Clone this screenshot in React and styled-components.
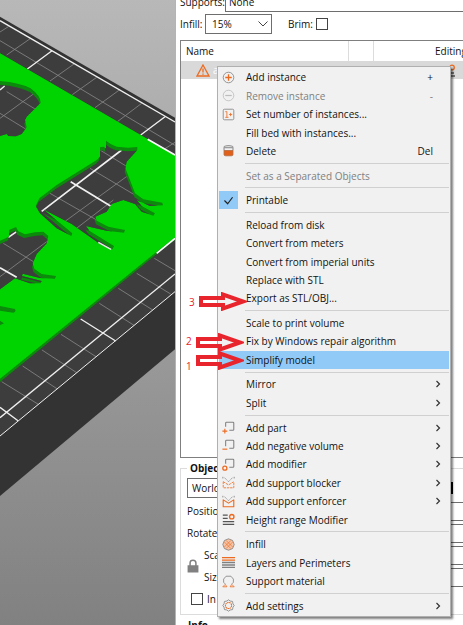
import React, { useState } from "react";
import styled, { createGlobalStyle, css } from "styled-components";

const BODY_HOLE =
  "M318,422 L332,432 L350,440 L385,443 L412,441 L412,450 L380,485 L376,505 L390,540 L405,580 L430,598 L487,608 L489,616 L450,618 L410,600 L425,618 L465,640 L460,647 L425,635 L405,612 L370,600 L335,612 L320,635 L286,650 L290,662 L325,680 L375,690 L372,698 L320,692 L258,678 L268,692 L342,738 L338,748 L300,732 L215,672 L130,628 L217,700 L214,708 L170,685 L120,640 L107,618 L118,595 L170,555 L290,480 L300,470 L300,442 L310,440 L318,445 Z";
const HEAD_HOLE =
  "M0,722 L27,710 L27,690 L48,681 L55,694 L75,703 L105,697 L130,695 L145,708 L140,730 L110,762 L98,790 L103,806 L125,822 L168,828 L165,836 L120,834 L68,821 L66,828 L125,843 L122,850 L90,850 L45,835 L0,868 Z";
const BACK_HOLE =
  "M0,243 Q60,248 92,265 Q122,288 122,308 L80,350 L75,360 L80,382 L65,402 L48,409 L25,408 L20,402 L0,408 Z";

const holes = [
  { id: "body", d: BODY_HOLE },
  { id: "head", d: HEAD_HOLE },
  { id: "back", d: BACK_HOLE },
];

const menuGroups = [
  [
    { label: "Add instance", icon: "plus", hint: "+" },
    { label: "Remove instance", icon: "minus", hint: "-", disabled: true },
    { label: "Set number of instances...", icon: "count" },
    { label: "Fill bed with instances..." },
    { label: "Delete", icon: "bin", hint: "Del" },
  ],
  [{ label: "Set as a Separated Objects", disabled: true }],
  [{ label: "Printable", checkable: true }],
  [
    { label: "Reload from disk" },
    { label: "Convert from meters" },
    { label: "Convert from imperial units" },
    { label: "Replace with STL" },
    { label: "Export as STL/OBJ..." },
  ],
  [
    { label: "Scale to print volume" },
    { label: "Fix by Windows repair algorithm" },
    { label: "Simplify model", active: true },
  ],
  [
    { label: "Mirror", sub: true },
    { label: "Split", sub: true },
  ],
  [
    { label: "Add part", icon: "part", sub: true },
    { label: "Add negative volume", icon: "negative", sub: true },
    { label: "Add modifier", icon: "modifier", sub: true },
    { label: "Add support blocker", icon: "blocker", sub: true },
    { label: "Add support enforcer", icon: "enforcer", sub: true },
    { label: "Height range Modifier", icon: "height" },
  ],
  [
    { label: "Infill", icon: "infill" },
    { label: "Layers and Perimeters", icon: "layers" },
    { label: "Support material", icon: "support" },
  ],
  [{ label: "Add settings", icon: "settings", sub: true }],
];

const steps = [
  { n: 3, top: 292, left: 189, drop: 0 },
  { n: 2, top: 333, left: 186, drop: -2 },
  { n: 1, top: 351, left: 186, drop: 5 },
];

const ORANGE = "#ed6b21";
const GREY = "#808080";

const iconShapes = {
  plus: (
    <>
      <circle cx="8" cy="8" r="6.5" stroke={GREY} />
      <path d="M8 4v8M4 8h8" stroke={ORANGE} strokeWidth="1.6" />
    </>
  ),
  minus: (
    <>
      <circle cx="8" cy="8" r="6.5" stroke="#bdbdbd" />
      <path d="M4 8h8" stroke="#bdbdbd" strokeWidth="1.5" />
    </>
  ),
  count: (
    <>
      <rect x="1.5" y="1.5" width="13" height="13" rx="1.5" stroke={GREY} />
      <path d="M4 4.5h2v7M4 11.5h4M8.5 8h4M10.5 6v4" stroke={ORANGE} />
    </>
  ),
  bin: (
    <>
      <path d="M2.5 8V4.5q0-2.500 5.500-2.500t5.500 2.500v3.500" stroke="#999" strokeWidth="1.5" />
      <path d="M2.5 4.5h11" stroke="#999" strokeWidth="1.5" />
      <path d="M2.5 8h11v5q0 1.500-2 1.500h-7q-2 0-2-1.500z" fill="#e0601a" stroke="#b06a42" />
    </>
  ),
  part: (
    <>
      <path d="M4.5 7V2.5q0-1 1-1h8q1 0 1 1v8q0 1-1 1H9" stroke={GREY} strokeWidth="1.3" />
      <path d="M3.5 9.5v6M.5 12.5h6" stroke={ORANGE} strokeWidth="1.4" />
    </>
  ),
  negative: (
    <>
      <path d="M4.5 9V2.5q0-1 1-1h8q1 0 1 1v8q0 1-1 1H9" stroke={GREY} strokeWidth="1.3" />
      <path d="M.5 12.5h6" stroke={ORANGE} strokeWidth="1.4" />
    </>
  ),
  modifier: (
    <>
      <path d="M4.5 7V2.5q0-1 1-1h8q1 0 1 1v8q0 1-1 1H9" stroke={GREY} strokeWidth="1.3" />
      <circle cx="3.5" cy="12.5" r="2.5" stroke={ORANGE} strokeWidth="1.6" />
    </>
  ),
  blocker: (
    <>
      <path d="M1 1v3M15 1v3M3 2l5 5 5-5" stroke={GREY} strokeDasharray="2 1" />
      <path d="M1.5 7v7.5h13V7M1.5 7l6.5 4 6.5-4" stroke={ORANGE} strokeDasharray="3 1" />
    </>
  ),
  enforcer: (
    <>
      <path d="M1 1v3M15 1v3M3 2l5 5 5-5" stroke={GREY} strokeDasharray="2 1" />
      <path d="M1.5 6v8.5h13V6L8 10z" stroke={ORANGE} strokeWidth="1.4" />
    </>
  ),
  height: (
    <>
      <path d="M1 2.5h6M1 6.5h6M1 10.5h14M1 14h14" stroke="#555" strokeWidth="1.5" />
      <circle cx="12" cy="4.5" r="2.7" stroke={ORANGE} strokeWidth="1.7" />
    </>
  ),
  infill: (
    <>
      <path d="M8 1l5 2 2 5-2 5-5 2-5-2-2-5 2-5z" fill="#f6c5a8" stroke={GREY} />
      <path d="M3 5l8 8M5 3l8 8M11 3l-8 8M13 5l-8 8" stroke={ORANGE} strokeWidth=".8" />
    </>
  ),
  layers: (
    <>
      <path d="M0 2h16M0 5h16" stroke={ORANGE} strokeWidth="1.6" />
      <path d="M0 8h16M0 11h16M0 14h16" stroke={GREY} strokeWidth="1.8" />
    </>
  ),
  support: (
    <>
      <path d="M4 11L2 9V5l3-3.5h6L14 5v4l-2 2" stroke={GREY} />
      <path d="M1 14.5h5l-2-3zM10 14.5h5l-3-3z" stroke={ORANGE} />
    </>
  ),
  settings: (
    <>
      <path d="M8 1l2 1.500 3 .5 .5 3 1.500 2-1.500 2-.5 3-3 .5L8 15l-2-1.500-3-.5-.5-3L1 8l1.500-2 .5-3 3-.5z" stroke={GREY} />
      <circle cx="8" cy="8" r="3.800" stroke={ORANGE} strokeWidth="1.3" strokeDasharray="2 .6" />
    </>
  ),
  check: <path d="M3 8l4 4 6-8" stroke="#222" strokeWidth="1.5" />,
};

const Icon = ({ name }) => (
  <IconSvg viewBox="0 0 16 16" aria-hidden="true">
    {iconShapes[name]}
  </IconSvg>
);

const Scene = () => (
  <SceneSvg viewBox="0 0 525 1875" preserveAspectRatio="xMinYMin slice">
    <defs>
      <linearGradient id="sky" x1="0" y1="0" x2="0" y2="1">
        <stop offset="0" stopColor="#b8b8b8" />
        <stop offset="1" stopColor="#818181" />
      </linearGradient>
      {holes.map((hole) => (
        <React.Fragment key={hole.id}>
          <clipPath id={hole.id}>
            <path d={hole.d} />
          </clipPath>
          <clipPath id={`${hole.id}-floor`} clipPath={`url(#${hole.id})`}>
            <path d={hole.d} transform="translate(-2 11)" />
          </clipPath>
        </React.Fragment>
      ))}
    </defs>
    <rect width="525" height="1875" fill="url(#sky)" />

    {/* bed plate and its side */}
    <path d="M0,50 L525,353 V1048 L0,1488 Z" fill="#333333" />
    <path d="M0,62 L525,366 V875 L0,1308 Z" fill="#3d3d3d" />
    <g fill="none" stroke="#858585" strokeWidth="2.5">
      <path d="M0,122 L525,436" />
      <path d="M25,80 L0,96 M92,115 L20,165 M222,192 L150,243 M290,232 L217,284 M358,270 L285,323 M425,310 L352,365 M525,427 L495,446" />
      <path d="M463,775 L525,812 M410,820 L512,882 M355,865 L458,930 M298,910 L402,976 M183,1003 L288,1070 M126,1050 L230,1118 M68,1098 L172,1167 M5,1145 L115,1213" />
    </g>
    <g fill="none" stroke="#f0f0f0" strokeWidth="4">
      <path d="M0,62 L525,366" />
      <path d="M156,152 L82,207 M495,350 L422,405" />
      <path d="M0,1253 L525,822" />
      <path d="M0,1308 L525,875" strokeWidth="3" />
      <path d="M242,957 L347,1023 M0,1222 L54,1262" />
    </g>

    {/* model */}
    <path d="M0,160 L525,465 V720 L470,762 L0,1146 Z" fill="#0b8a0b" />
    <path d="M0,160 L525,465 V712 L470,755 L0,1136 Z" fill="#00d400" />
    <path d="M443,418 L525,465 M470,760 L525,715" stroke="#fff" strokeWidth="5" />
    {holes.map((hole) => (
      <path key={hole.id} d={hole.d} fill="#0b8a0b" />
    ))}
    <path d="M0,918 L45,927 Q50,935 40,938 L0,932 Z M0,962 L12,970 L0,976 Z" fill="#0b8a0b" />

    <g clipPath="url(#body-floor)" fill="none">
      <rect width="525" height="1875" fill="#3d3d3d" />
      <path
        d="M300,450 L430,530 M270,505 L430,600 M400,515 L180,675 M150,580 L290,660 M340,600 L210,700"
        stroke="#858585"
        strokeWidth="2.5"
      />
      <path d="M365,450 L125,634 M212,545 L345,626" stroke="#f0f0f0" strokeWidth="5" />
    </g>
    <path d="M295,727 L333,748" stroke="#f0f0f0" strokeWidth="4" />
    <g clipPath="url(#head-floor)" fill="none">
      <rect width="525" height="1875" fill="#3d3d3d" />
      <path d="M10,730 L125,800 M140,725 L0,830" stroke="#858585" strokeWidth="2.5" />
      <path d="M25,712 L50,695 M0,803 L50,832" stroke="#f0f0f0" strokeWidth="5" />
    </g>
    <g clipPath="url(#back-floor)" fill="none">
      <rect width="525" height="1875" fill="#3d3d3d" />
      <path
        d="M20,275 L110,330 M0,340 L85,392 M110,275 L0,355"
        stroke="#858585"
        strokeWidth="2.5"
      />
      <path d="M0,270 L14,258" stroke="#f0f0f0" strokeWidth="4" />
    </g>
  </SceneSvg>
);

const MenuItem = ({ item }) => {
  const [checked, setChecked] = useState(true);
  return (
    <Item
      type="button"
      role={item.checkable ? "menuitemcheckbox" : "menuitem"}
      aria-checked={item.checkable ? checked : undefined}
      aria-haspopup={item.sub ? "menu" : undefined}
      disabled={item.disabled}
      $active={item.active}
      onClick={() => item.checkable && setChecked(!checked)}
    >
      <IconCell $checked={item.checkable && checked}>
        {item.checkable && checked && <Icon name="check" />}
        {item.icon && <Icon name={item.icon} />}
      </IconCell>
      <ItemLabel>{item.label}</ItemLabel>
      {item.hint && <Hint>{item.hint}</Hint>}
      {item.sub && (
        <Chevron viewBox="0 0 8 8" aria-hidden="true">
          <path d="M2.5 1L5.5 4 2.5 7" />
        </Chevron>
      )}
    </Item>
  );
};

const SelectArrow = () => (
  <Arrow viewBox="0 0 10 6" aria-hidden="true">
    <path d="M.5 .5L5 5 9.5 .5" />
  </Arrow>
);

const App = () => {
  return (
    <>
      <GlobalStyle />
      <Page>
        <Viewport>
          <Scene />
        </Viewport>

        <Sidebar>
          <SidebarContent>
            <SupportsRow>
              <SupportsLabel htmlFor="supports">Supports:</SupportsLabel>
              <WideSelect id="supports">
                <option>None</option>
              </WideSelect>
            </SupportsRow>
            <InfillRow>
              <InfillLabel htmlFor="infill">Infill:</InfillLabel>
              <SelectWrap>
                <Select id="infill">
                  <option>15%</option>
                </Select>
                <SelectArrow />
              </SelectWrap>
              <BrimLabel>
                Brim:
                <Checkbox type="checkbox" />
              </BrimLabel>
            </InfillRow>

            <ObjectList>
              <thead>
                <tr>
                  <NameHead>Name</NameHead>
                  <EyeHead />
                  <EditHead>Editing</EditHead>
                </tr>
              </thead>
              <tbody>
                <SelectedRow>
                  <NameCell>
                    <NameWrap>
                      <WarnSvg viewBox="0 0 14 13" aria-label="warning">
                        <path d="M7 1L13 12H1z" />
                        <path d="M7 4.5v4M7 9.500v1.300" />
                      </WarnSvg>
                      a
                    </NameWrap>
                  </NameCell>
                  <td />
                  <EditCell>
                    <WarnSvg viewBox="0 0 14 13" aria-label="edit">
                      <circle cx="9" cy="3.5" r="2.3" />
                      <path d="M4 12h8M7 9h4" stroke="#555" />
                    </WarnSvg>
                  </EditCell>
                </SelectedRow>
              </tbody>
            </ObjectList>

            <ObjectBox>
              <BoxTitle>Object</BoxTitle>
              <CoordinatesRow>
                <Coordinates aria-label="Coordinates">
                  <option>World</option>
                </Coordinates>
                <AxisSvg viewBox="0 0 12 12" aria-hidden="true">
                  <path d="M1 1h10v10H1z" />
                </AxisSvg>
              </CoordinatesRow>
              <FieldRow>
                <label htmlFor="position">Position</label>
                <Field id="position" />
              </FieldRow>
              <FieldRow>
                <label htmlFor="rotate">Rotate</label>
                <Field id="rotate" />
              </FieldRow>
              <ScaleGroup>
                <LockSvg viewBox="0 0 10 12" aria-label="lock">
                  <path d="M2.5 6V3.5q0-2.5 2.5-2.5t2.5 2.5V6" fill="none" />
                  <path d="M1 6h8v5H1z" fill={GREY} />
                </LockSvg>
                <div>
                  <FieldRow>
                    <label htmlFor="scale">Scale</label>
                    <Field id="scale" />
                  </FieldRow>
                  <FieldRow>
                    <label htmlFor="size">Size</label>
                    <Field id="size" />
                  </FieldRow>
                </div>
              </ScaleGroup>
              <InchesLabel>
                <Checkbox type="checkbox" />
                In
              </InchesLabel>
            </ObjectBox>
            <InfoTitle>Info</InfoTitle>
          </SidebarContent>
        </Sidebar>

        <Menu role="menu">
          {menuGroups.map((group, i) => (
            <React.Fragment key={i}>
              {i > 0 && <Separator />}
              {group.map((item) => (
                <MenuItem key={item.label} item={item} />
              ))}
            </React.Fragment>
          ))}
        </Menu>

        {steps.map((step) => (
          <Step key={step.n} $top={step.top} $left={step.left}>
            <StepNumber $drop={step.drop}>{step.n}</StepNumber>
            <StepArrow viewBox="0 0 48 19">
              <path d="M2 6h22V2.5l20 7-20 7V13H2z" />
            </StepArrow>
          </Step>
        ))}
      </Page>
    </>
  );
};

export default App;

const GlobalStyle = createGlobalStyle`
  * {
    box-sizing: border-box;
  }

  body {
    margin: 0;
  }

  body, button, input, select {
    font-family: "Open Sans", "Noto Sans", sans-serif;
    font-size: 10px;
    line-height: 16px;
    color: #111;
  }
`;

const Page = styled.main`
  position: relative;
  display: grid;
  grid-template-columns: 175px 1fr;
  height: 100vh;
  min-height: 600px;
  overflow: hidden;
  background-color: white;
`;

const Viewport = styled.section`
  min-height: 0;
  overflow: hidden;
`;

const SceneSvg = styled.svg`
  display: block;
  width: 100%;
  height: 100%;
`;

const Sidebar = styled.section`
  display: flex;
  min-width: 0;
  min-height: 0;
  overflow: hidden;
  border-left: 1px solid #b4b4b4;
`;

const SidebarContent = styled.div`
  display: flex;
  flex-direction: column;
  flex: 1 0 auto;
  width: 110%;
  margin-top: -8px;
  padding-left: 4px;
`;

const SupportsRow = styled.div`
  display: flex;
  align-items: center;
  height: 20px;
`;

const SupportsLabel = styled.label`
  width: 45px;
`;

const InfillRow = styled.div`
  display: flex;
  align-items: center;
  height: 20px;
  margin: 2px 0 6px;
`;

const InfillLabel = styled.label`
  width: 25px;
`;

const boxed = css`
  appearance: none;
  border: 1px solid #6e6e6e;
  border-radius: 0;
  background-color: white;
  padding: 0 4px;
`;

const Select = styled.select`
  ${boxed}
  width: 67px;
  height: 20px;
  padding: 0 6px;
`;

const WideSelect = styled(Select)`
  flex: 1;
  padding: 0 3px;
`;

const SelectWrap = styled.div`
  position: relative;
  display: flex;
`;

const Arrow = styled.svg`
  position: absolute;
  right: 4px;
  top: 7px;
  width: 10px;
  height: 6px;
  fill: none;
  stroke: #444;
  pointer-events: none;
`;

const BrimLabel = styled.label`
  display: flex;
  align-items: center;
  gap: 3px;
  margin-left: 16px;
`;

const Checkbox = styled.input`
  appearance: none;
  width: 12px;
  height: 12px;
  margin: 0;
  border: 1px solid #444;
  background-color: white;
`;

const ObjectList = styled.table`
  display: block;
  flex: 1;
  border: 1px solid #7f7f7f;
  border-spacing: 0;

  th,
  td {
    padding: 0;
    font-weight: 400;
    text-align: left;
  }
`;

const NameHead = styled.th`
  min-width: 168px;
  height: 20px;
  padding-left: 5px !important;
  border-right: 1px solid #dcdcdc;
`;

const EyeHead = styled.th`
  min-width: 25px;
  border-right: 1px solid #dcdcdc;
`;

const EditHead = styled.th`
  min-width: 160px;
  padding-left: 61px !important;
`;

const SelectedRow = styled.tr`
  height: 18px;
  background-color: #d9d9d9;
`;

const NameCell = styled.td`
  padding-left: 15px !important;
  color: white;
`;

const NameWrap = styled.span`
  display: flex;
  align-items: center;
  gap: 3px;
`;

const EditCell = styled.td`
  padding-left: 69px !important;
  line-height: 0;
`;

const WarnSvg = styled.svg`
  width: 14px;
  height: 13px;
  fill: none;
  stroke: ${ORANGE};
  stroke-width: 1.3;
`;

const ObjectBox = styled.fieldset`
  margin: 2px 0 0;
  padding: 0 0 6px 6px;
  min-width: 0;
  border: 1px solid #dcdcdc;
`;

const BoxTitle = styled.legend`
  padding: 0 3px;
  font-weight: 700;
`;

const CoordinatesRow = styled.div`
  display: flex;
  align-items: center;
  gap: 54px;
  margin: 2px 0;
`;

const Coordinates = styled.select`
  ${boxed}
  width: 200px;
  height: 20px;
`;

const AxisSvg = styled.svg`
  width: 12px;
  height: 12px;
  fill: none;
  stroke: black;
  stroke-width: 2;
`;

const FieldRow = styled.div`
  display: flex;
  align-items: center;
  gap: 8px;
  height: 22px;
`;

const Field = styled.input`
  ${boxed}
  flex: 1;
  height: 19px;
`;

const ScaleGroup = styled.div`
  display: grid;
  grid-template-columns: 17px 1fr;
  align-items: center;
`;

const LockSvg = styled.svg`
  width: 12px;
  height: 14px;
  stroke: ${GREY};
  stroke-width: 1.3;
`;

const InchesLabel = styled.label`
  display: flex;
  align-items: center;
  gap: 4px;
  height: 18px;
  margin-top: 2px;
  padding-left: 4px;
`;

const InfoTitle = styled.h2`
  height: 10px;
  margin: 0;
  padding: 2px 8px;
  font-size: 10px;
  line-height: 16px;
`;

const Menu = styled.div`
  position: absolute;
  top: 66px;
  bottom: 8px;
  left: 217px;
  width: 234px;
  display: flex;
  flex-direction: column;
  padding: 1px;
  border: 1px solid #b0b0b0;
  background-color: #f1f1f1;
  box-shadow: 2px 2px 2px rgba(0, 0, 0, 0.5);
`;

const Item = styled.button`
  display: flex;
  align-items: center;
  flex: 3 0 0;
  min-height: 16px;
  padding: 0;
  border: none;
  background-color: ${({ $active }) => ($active ? "#91c9f7" : "transparent")};
  text-align: left;

  &:disabled {
    color: #808080;
  }
`;

const IconCell = styled.span`
  display: flex;
  align-items: center;
  justify-content: center;
  align-self: stretch;
  width: 19px;
  margin-right: 8px;
  background-color: ${({ $checked }) => ($checked ? "#91c9f7" : "transparent")};
`;

const IconSvg = styled.svg`
  width: 13px;
  height: 13px;
  fill: none;
  stroke-linejoin: round;
`;

const ItemLabel = styled.span`
  flex: 1;
`;

const Hint = styled.span`
  padding-right: 16px;
`;

const Chevron = styled.svg`
  width: 8px;
  height: 8px;
  margin-right: 7px;
  fill: none;
  stroke: #333;
  stroke-width: 1.2;
`;

const Separator = styled.hr`
  display: flex;
  align-items: center;
  flex: 1 0 0;
  width: 204px;
  margin: 0 0 0 auto;
  border: none;

  &::after {
    content: "";
    width: 100%;
    border-top: 1px solid #d0d0d0;
  }
`;

const Step = styled.div`
  position: absolute;
  top: ${({ $top }) => $top}px;
  left: ${({ $left }) => $left}px;
  display: flex;
  align-items: center;
  gap: 4px;
  height: 19px;
  pointer-events: none;
`;

const StepNumber = styled.span`
  color: #e8242c;
  margin-top: ${({ $drop }) => $drop * 2}px;
`;

const StepArrow = styled.svg`
  width: 48px;
  height: 19px;
  fill: none;
  stroke: #e8242c;
  stroke-width: 4;
`;
